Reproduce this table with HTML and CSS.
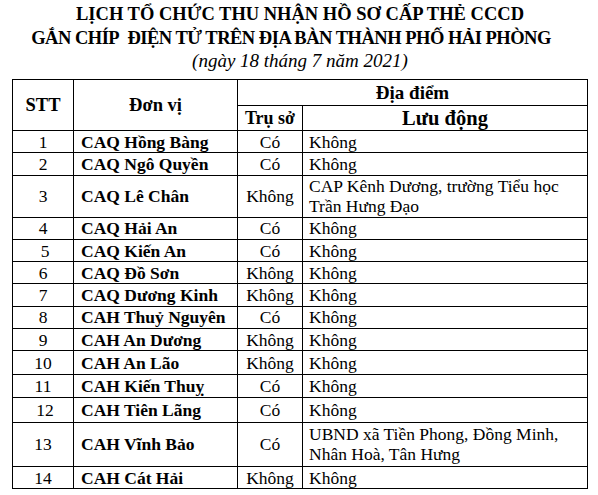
FILE: index.html
```html
<!DOCTYPE html>
<html lang="vi">
<head>
<meta charset="utf-8">
<title>Lịch tổ chức thu nhận hồ sơ cấp thẻ CCCD</title>
<link rel="stylesheet" href="styles.css">
</head>
<body>
<div class="page">
  <header class="heading">
    <div class="title">LỊCH TỔ CHỨC THU NHẬN HỒ SƠ CẤP THẺ CCCD</div>
    <div class="title title-2">GẮN CHÍP&nbsp; ĐIỆN TỬ TRÊN ĐỊA BÀN THÀNH PHỐ HẢI PHÒNG</div>
    <div class="date">(ngày 18 tháng 7 năm 2021)</div>
  </header>
  <table class="sched">
    <colgroup>
      <col class="c-stt">
      <col class="c-unit">
      <col class="c-hq">
      <col class="c-mobile">
    </colgroup>
    <thead>
      <tr class="h1">
        <th rowspan="2" class="th-stt">STT</th>
        <th rowspan="2" class="th-unit">Đơn vị</th>
        <th colspan="2" class="th-place">Địa điểm</th>
      </tr>
      <tr class="h2">
        <th class="th-hq">Trụ sở</th>
        <th class="th-mobile">Lưu động</th>
      </tr>
    </thead>
    <tbody>
      <tr class="r"><td class="n">1</td><td class="u">CAQ Hồng Bàng</td><td class="q">Có</td><td class="m">Không</td></tr>
      <tr class="r"><td class="n">2</td><td class="u">CAQ Ngô Quyền</td><td class="q">Có</td><td class="m">Không</td></tr>
      <tr class="r2"><td class="n">3</td><td class="u">CAQ Lê Chân</td><td class="q">Không</td><td class="m">CAP Kênh Dương, trường Tiểu học Trần Hưng Đạo</td></tr>
      <tr class="r"><td class="n">4</td><td class="u">CAQ Hải An</td><td class="q">Có</td><td class="m">Không</td></tr>
      <tr class="r"><td class="n n-off">5</td><td class="u">CAQ Kiến An</td><td class="q">Có</td><td class="m">Không</td></tr>
      <tr class="r"><td class="n">6</td><td class="u">CAQ Đồ Sơn</td><td class="q">Không</td><td class="m">Không</td></tr>
      <tr class="r"><td class="n">7</td><td class="u">CAQ Dương Kinh</td><td class="q">Không</td><td class="m">Không</td></tr>
      <tr class="r"><td class="n">8</td><td class="u">CAH Thuỷ Nguyên</td><td class="q">Có</td><td class="m">Không</td></tr>
      <tr class="r"><td class="n">9</td><td class="u">CAH An Dương</td><td class="q">Không</td><td class="m">Không</td></tr>
      <tr class="r ra"><td class="n">10</td><td class="u">CAH An Lão</td><td class="q">Không</td><td class="m">Không</td></tr>
      <tr class="r ra"><td class="n">11</td><td class="u">CAH Kiến Thuỵ</td><td class="q">Có</td><td class="m">Không</td></tr>
      <tr class="r rb"><td class="n n-off">12</td><td class="u">CAH Tiên Lãng</td><td class="q">Có</td><td class="m">Không</td></tr>
      <tr class="r2 r2b"><td class="n">13</td><td class="u">CAH Vĩnh Bảo</td><td class="q">Có</td><td class="m">UBND xã Tiền Phong, Đồng Minh, Nhân Hoà, Tân Hưng</td></tr>
      <tr class="r"><td class="n">14</td><td class="u">CAH Cát Hải</td><td class="q">Không</td><td class="m">Không</td></tr>
    </tbody>
  </table>
</div>
</body>
</html>
```
FILE: styles.css
```css
html {
  overflow: hidden;
}
html, body {
  margin: 0;
  padding: 0;
  background: #ffffff;
}
body {
  font-family: "Liberation Serif", "Times New Roman", serif;
  color: #000000;
}
.page {
  padding: 2px 0 0 12px;
}
.heading {
  width: 576px;
  text-align: center;
  margin-bottom: 8px;
}
.title {
  font-weight: bold;
  font-size: 18.5px;
  line-height: 24px;
}
.title-2 {
  letter-spacing: -0.5px;
  padding-right: 18px;
}
.date {
  font-style: italic;
  font-size: 19px;
  line-height: 21px;
}
.sched {
  border-collapse: collapse;
  width: 575px;
  table-layout: fixed;
  font-size: 17.5px;
}
.c-stt { width: 61px; }
.c-unit { width: 164px; }
.c-hq { width: 65px; }
.c-mobile { width: 285px; }
.sched th, .sched td {
  border: 1px solid #000000;
  padding: 0;
  line-height: 20px;
  vertical-align: middle;
  white-space: nowrap;
}
.sched th {
  font-weight: bold;
  text-align: center;
}
.sched .th-stt, .sched .th-unit { font-size: 18.5px; }
.sched .th-place { font-size: 19px; }
.sched .th-hq { font-size: 18px; }
.sched .th-mobile { font-size: 20.5px; }
.h1 { height: 26px; }
.h2 { height: 25px; }
.r { height: 22.3px; }
.ra { height: 23.3px; }
.rb { height: 25px; }
.r2 { height: 42px; }
.r2b { height: 44px; }
.sched .n { text-align: center; }
.sched .n-off { padding-left: 4px; }
.sched .u { font-weight: bold; padding-left: 7px; }
.sched .q { text-align: center; }
.sched .m { text-align: left; padding-left: 6px; white-space: normal; }
```
